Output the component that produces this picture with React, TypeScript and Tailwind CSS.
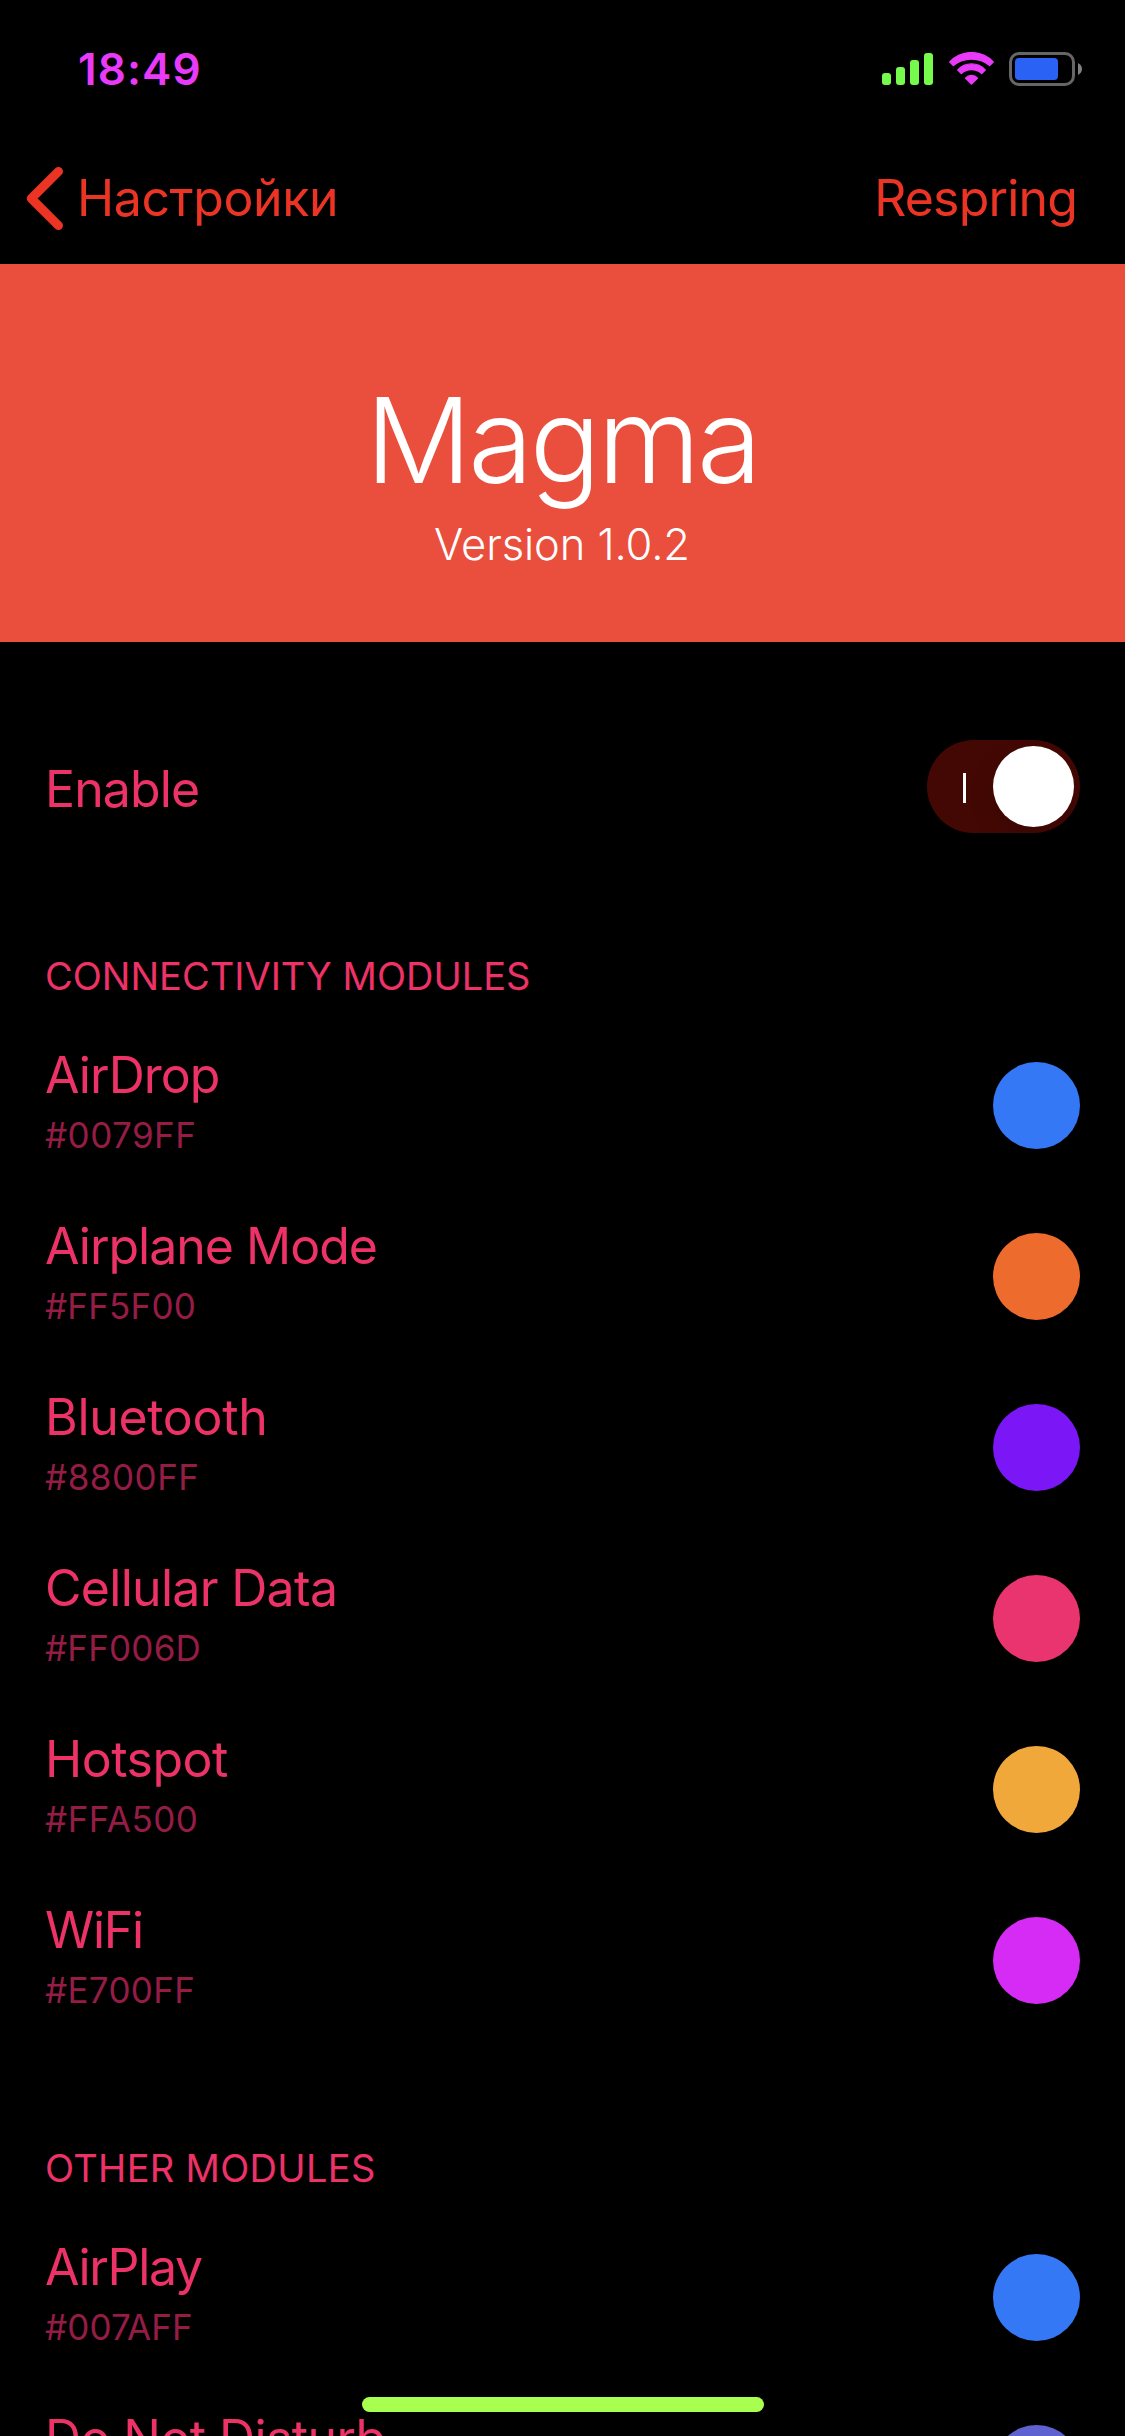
type Module = { name: string; hex: string; dot: string; nameTracking: string; hexTracking: string };

const connectivity: Module[] = [
  { name: 'AirDrop', hex: '#0079FF', dot: 'bg-[#3478f6]', nameTracking: 'tracking-[-0.95px]', hexTracking: 'tracking-[0.45px]' },
  { name: 'Airplane Mode', hex: '#FF5F00', dot: 'bg-[#ed6c2d]', nameTracking: 'tracking-[-1px]', hexTracking: 'tracking-[0.2px]' },
  { name: 'Bluetooth', hex: '#8800FF', dot: 'bg-[#7b16f6]', nameTracking: 'tracking-[-0.32px]', hexTracking: 'tracking-[0.5px]' },
  { name: 'Cellular Data', hex: '#FF006D', dot: 'bg-[#e9346f]', nameTracking: 'tracking-[-0.7px]', hexTracking: 'tracking-[0.2px]' },
  { name: 'Hotspot', hex: '#FFA500', dot: 'bg-[#f1a83b]', nameTracking: 'tracking-[-0.5px]', hexTracking: 'tracking-[0.48px]' },
  { name: 'WiFi', hex: '#E700FF', dot: 'bg-[#d52bf5]', nameTracking: 'tracking-[-1.3px]', hexTracking: 'tracking-[0.32px]' },
];

const others: Module[] = [
  { name: 'AirPlay', hex: '#007AFF', dot: 'bg-[#3478f6]', nameTracking: 'tracking-[-1.3px]', hexTracking: 'tracking-[0.1px]' },
  { name: 'Do Not Disturb', hex: '', dot: 'bg-[#5e62d0]', nameTracking: 'tracking-[-0.6px]', hexTracking: 'tracking-normal' },
];

function SignalBars() {
  return (
    <div className="flex items-end gap-[5px]">
      <span className="h-3 w-[9px] rounded-[3px] bg-[#76fb4c]" />
      <span className="h-[18px] w-[9px] rounded-[3px] bg-[#76fb4c]" />
      <span className="h-[25px] w-[9px] rounded-[3px] bg-[#76fb4c]" />
      <span className="h-8 w-[9px] rounded-[3px] bg-[#76fb4c]" />
    </div>
  );
}

function WifiIcon() {
  return (
    <svg width="45" height="33" viewBox="0 0 45 33" fill="#e83af8" stroke="#e83af8" strokeWidth="1.4" strokeLinejoin="round">
      <path d="M0.8 9.9A30 30 0 0 1 44.2 9.9L40.6 13.4A28.7 28.7 0 0 0 4.4 13.4Z" />
      <path d="M8.8 18A18.4 18.4 0 0 1 36.2 18L32.7 21.4A15.3 15.3 0 0 0 12.3 21.4Z" />
      <path d="M16.6 26.2A7.8 7.8 0 0 1 28.4 26.2L22.5 32.1Z" />
    </svg>
  );
}

function Battery() {
  return (
    <div className="flex items-center gap-[3px]">
      <div className="h-[34px] w-[66px] rounded-[10px] border-[3px] border-[#666666] p-[3px]">
        <div className="h-[22px] w-[43px] rounded-[4px] bg-[#2a62f6]" />
      </div>
      <svg width="4" height="12" viewBox="0 0 4 12" fill="#808080">
        <path d="M0 0C2.6 1.3 4 3.5 4 6S2.6 10.7 0 12Z" />
      </svg>
    </div>
  );
}

function StatusBar() {
  return (
    <div className="flex h-[138px] shrink-0 items-start justify-between pl-[78px] pr-[43px] pt-[52px]">
      <span className="-mt-[10px] text-[44px] font-semibold leading-[54px] tracking-[1.1px] text-[#e83af8]">18:49</span>
      <div className="flex items-start">
        <div className="mr-[15.5px] flex h-[33px] items-end">
          <SignalBars />
        </div>
        <div className="mr-[15.5px]">
          <WifiIcon />
        </div>
        <Battery />
      </div>
    </div>
  );
}

function NavBar() {
  return (
    <div className="flex h-[126px] shrink-0 items-start justify-between pl-[26px] pr-[48px] pt-[28px] text-[50px] leading-[60px] text-[#eb3424]">
      <button className="flex items-start">
        <svg className="mr-[13px]" width="38" height="65" viewBox="0 0 38 65" fill="none" stroke="currentColor" strokeWidth="9" strokeLinecap="round" strokeLinejoin="round">
          <path d="M32.5 5.4L5.3 32.5L32.5 59.6" />
        </svg>
        <span className="pt-[2px] tracking-[-0.4px]">Настройки</span>
      </button>
      <button className="pt-[2px] tracking-[-0.84px]">Respring</button>
    </div>
  );
}

function Toggle() {
  return (
    <div className="flex h-[93px] w-[153px] items-center justify-between rounded-full bg-[#440804] pl-9 pr-[6px]">
      <span className="mt-[3px] h-[30px] w-[3px] bg-white" />
      <span className="h-[81px] w-[81px] rounded-full bg-white shadow-[0_9px_24px_rgba(0,0,0,0.15)]" />
    </div>
  );
}

function ModuleRow({ item }: { item: Module }) {
  return (
    <div className="flex h-[171px] shrink-0 items-center justify-between pl-[45px] pr-[45px]">
      <div className="flex h-full flex-col pt-[25px]">
        <span className={`text-[50px] leading-[60px] text-[#ec3266] ${item.nameTracking}`}>{item.name}</span>
        <span className={`mt-[9px] text-[35px] leading-[42px] text-[#951c45] ${item.hexTracking}`}>{item.hex}</span>
      </div>
      <span className={`h-[87px] w-[87px] rounded-full ${item.dot}`} />
    </div>
  );
}

function SectionHeader({ title, tracking }: { title: string; tracking: string }) {
  return (
    <h2 className={`h-[166px] shrink-0 pl-[45px] pt-[99px] text-[38px] leading-[46px] text-[#ec3266] ${tracking}`}>{title}</h2>
  );
}

export default function App() {
  return (
    <div className="relative flex h-[2436px] w-[1125px] flex-col overflow-hidden bg-black font-['Inter',sans-serif]">
      <StatusBar />
      <NavBar />
      <header className="flex h-[378px] shrink-0 flex-col items-center bg-[#ea4f3d] pt-[117px] text-white">
        <h1 className="pr-[1px] text-[118px] font-[340] leading-[118px] tracking-[-3.4px]">Magma</h1>
        <p className="mt-[19px] pr-[1px] text-[43.5px] font-light leading-[52px] tracking-[-0.1px]">Version 1.0.2</p>
      </header>
      <div className="flex h-[212px] shrink-0 items-start justify-between pl-[45px] pr-[45px] pt-[98px]">
        <span className="pt-[19px] text-[50px] leading-[60px] tracking-[-0.88px] text-[#ec3266]">Enable</span>
        <Toggle />
      </div>
      <SectionHeader title="CONNECTIVITY MODULES" tracking="tracking-normal" />
      {connectivity.map((m) => (
        <ModuleRow key={m.name} item={m} />
      ))}
      <SectionHeader title="OTHER MODULES" tracking="tracking-[0.32px]" />
      {others.map((m) => (
        <ModuleRow key={m.name} item={m} />
      ))}
      <div className="absolute bottom-6 left-[362px] h-[15px] w-[402px] rounded-full bg-[#a8ff4f]" />
    </div>
  );
}
